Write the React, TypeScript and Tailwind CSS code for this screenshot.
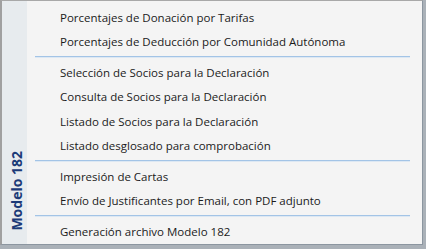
import React from "react";

type Entry = { t: string } | { sep: true };

const entries: Entry[] = [
  { t: "Porcentajes de Donación por Tarifas" },
  { t: "Porcentajes de Deducción por Comunidad Autónoma" },
  { sep: true },
  { t: "Selección de Socios para la Declaración" },
  { t: "Consulta de Socios para la Declaración" },
  { t: "Listado de Socios para la Declaración" },
  { t: "Listado desglosado para comprobación" },
  { sep: true },
  { t: "Impresión de Cartas" },
  { t: "Envío de Justificantes por Email, con PDF adjunto" },
  { sep: true },
  { t: "Generación archivo Modelo 182" },
];

export default function App() {
  return (
    <div className="w-[426px] h-[249px] bg-[#aab1b8] pr-[3px] pb-[4px] overflow-hidden">
      <div className="w-full h-full flex border-t border-t-[#a8a8a8] border-l-2 border-l-[#a0a0a0] border-r border-r-[#8c96a0] border-b border-b-[#8c96a0]">
        <div className="w-[25px] h-full bg-[#e7ebee] flex flex-col justify-end items-center pb-[13px] pl-[4px]">
          <span
            className="[writing-mode:vertical-rl] rotate-180 font-bold text-[14px] leading-none text-[#1c3a78] whitespace-nowrap"
            style={{ fontFamily: '"Open Sans", "Noto Sans", sans-serif' }}
          >
            Modelo 182
          </span>
        </div>
        <div
          className="flex-1 h-full bg-[#f4f4f4] pt-[4px] flex flex-col"
          style={{ fontFamily: '"Open Sans", "Noto Sans", sans-serif' }}
        >
          {entries.map((e, i) =>
            "sep" in e ? (
              <div key={i} className="h-[6px] flex flex-col justify-center pl-[8px] pr-[12px]">
                <div className="h-px bg-[#a3c4e6]" />
                <div className="h-px bg-[#dde8f3]" />
              </div>
            ) : (
              <div
                key={i}
                className="h-[24.5px] flex items-center pl-[33px] text-[11.5px] text-[#1b1b1b] whitespace-nowrap"
              >
                {e.t}
              </div>
            )
          )}
        </div>
      </div>
    </div>
  );
}
